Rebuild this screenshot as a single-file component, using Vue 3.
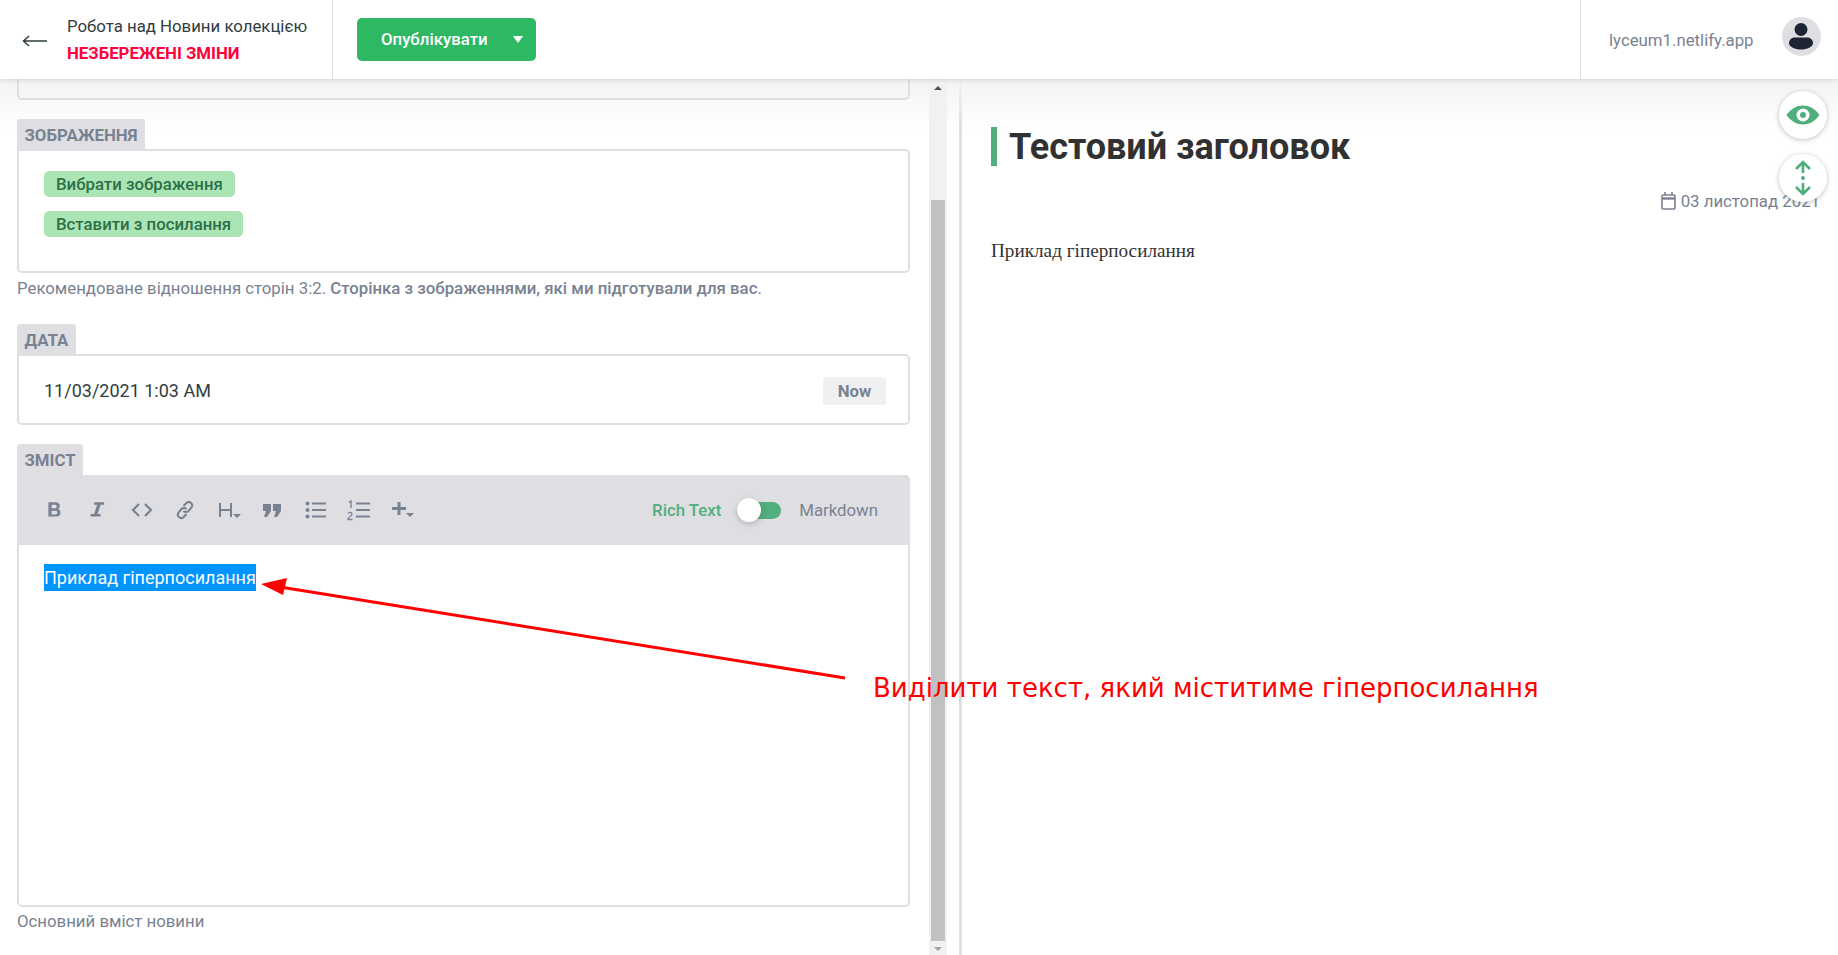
<script setup>
const tools = [
  { key: 'bold', d: 'M4 3h6.2c2.6 0 4.2 1.3 4.2 3.4 0 1.4-.8 2.4-1.9 2.8 1.5.4 2.500 1.6 2.500 3.2 0 2.4-1.8 3.6-4.500 3.6H4zm2.900 2.300v3.100h2.900c1.100 0 1.800-.6 1.800-1.600s-.7-1.500-1.800-1.500zm0 5.300v3.400h3.200c1.300 0 2-.6 2-1.700s-.7-1.700-2-1.700z' },
  { key: 'italic', d: 'M6.500 3h9v2.300h-3.100l-2.800 8.400h2.700V16h-9v-2.300h3.100l2.800-8.400H6.500z' }
]
</script>

<template>
  <div class="page">
    <header class="topbar">
      <div class="back-block">
        <svg class="back-arrow" width="26" height="12" viewBox="0 0 26 12"><path d="M25 6H2M7 1 1.500 6 7 11" fill="none" stroke="#313d3e" stroke-width="1.500"/></svg>
        <div class="back-text">
          <div class="back-title">Робота над Новини колекцією</div>
          <div class="back-status">НЕЗБЕРЕЖЕНІ ЗМІНИ</div>
        </div>
      </div>
      <div class="publish-block">
        <div class="publish-btn">
          <span>Опублікувати</span>
          <i class="caret"></i>
        </div>
      </div>
      <div class="site-block">
        <span class="site-url">lyceum1.netlify.app</span>
        <div class="avatar">
          <svg width="26" height="28" viewBox="0 0 26 28"><circle cx="13" cy="7.500" r="6.500" fill="#1e2532"/><path d="M1 21c0-3.500 3-5.500 6-5.500h12c3 0 6 2 6 5.500 0 4-6 6.500-12 6.500S1 25 1 21z" fill="#1e2532"/></svg>
        </div>
      </div>
    </header>

    <main class="workspace">
      <div class="shade"></div>

      <section class="editor">
        <div class="cut-box"></div>

        <div class="field">
          <div class="tag">ЗОБРАЖЕННЯ</div>
          <div class="box image-box">
            <div class="green-btn">Вибрати зображення</div>
            <div class="green-btn">Вставити з посилання</div>
          </div>
          <p class="hint">Рекомендоване відношення сторін 3:2. <b>Сторінка з зображеннями, які ми підготували для вас</b>.</p>
        </div>

        <div class="field date-field">
          <div class="tag">ДАТА</div>
          <div class="box date-box">
            <span class="date-value">11/03/2021 1:03 AM</span>
            <div class="now-btn">Now</div>
          </div>
        </div>

        <div class="field body-field">
          <div class="tag">ЗМІСТ</div>
          <div class="toolbar">
            <div class="tool" v-for="t in tools" :key="t.key">
              <svg width="22" height="22" viewBox="0 0 20 20"><path :d="t.d" fill="#798291" fill-rule="evenodd"/></svg>
            </div>
            <div class="tool">
              <svg width="24" height="20" viewBox="0 0 24 20"><path d="M9 4 3 10l6 6M15 4l6 6-6 6" fill="none" stroke="#798291" stroke-width="2.200"/></svg>
            </div>
            <div class="tool">
              <svg width="20" height="20" viewBox="0 0 20 20" fill="none" stroke="#798291" stroke-width="2"><path d="m8.500 6 2.800-3a3.400 3.400 0 0 1 5 4.600L13.500 11a3.400 3.400 0 0 1-5 0"/><path d="m11.500 14-2.800 3a3.400 3.400 0 0 1-5-4.600L6.500 9a3.400 3.400 0 0 1 5 0"/></svg>
            </div>
            <div class="tool">
              <svg width="26" height="20" viewBox="0 0 26 20"><path d="M4 3v14M15 3v14M4 10h11" fill="none" stroke="#798291" stroke-width="2"/><path d="M17 14h8l-4 4z" fill="#798291"/></svg>
            </div>
            <div class="tool">
              <svg width="20" height="20" viewBox="0 0 20 20"><path d="M1 4h8v7l-4 6H2l2-6H1zM11 4h8v7l-4 6h-3l2-6h-3z" fill="#798291"/></svg>
            </div>
            <div class="tool">
              <svg width="22" height="20" viewBox="0 0 22 20"><circle cx="2.500" cy="3.500" r="2" fill="#798291"/><circle cx="2.500" cy="10" r="2" fill="#798291"/><circle cx="2.500" cy="16.500" r="2" fill="#798291"/><path d="M7 3.500h14M7 10h14M7 16.500h14" stroke="#798291" stroke-width="2.200"/></svg>
            </div>
            <div class="tool">
              <svg width="24" height="22" viewBox="0 0 24 22" fill="none" stroke="#798291"><path d="M2 3.500 4 2v7" stroke-width="1.300"/><path d="M1 14.500c.6-1.600 4-1.500 4 .4 0 1.700-3.800 3-4 5.600h4.400" stroke-width="1.300"/><path d="M9 4.500h14M9 11h14M9 17.500h14" stroke-width="2.200"/></svg>
            </div>
            <div class="tool">
              <svg width="24" height="20" viewBox="0 0 24 20"><path d="M1 8.500h14M8 2v13" fill="none" stroke="#798291" stroke-width="3"/><path d="M15 13h8l-4 4z" fill="#798291"/></svg>
            </div>
            <div class="mode-switch">
              <span class="mode-on">Rich Text</span>
              <div class="switch"><i class="knob"></i></div>
              <span class="mode-off">Markdown</span>
            </div>
          </div>
          <div class="box body-box">
            <span class="selected">Приклад гіперпосилання</span>
          </div>
          <p class="hint">Основний вміст новини</p>
        </div>
      </section>

      <div class="scrollbar">
        <i class="scroll-up"></i>
        <div class="thumb"></div>
        <i class="scroll-down"></i>
      </div>
      <div class="divider"></div>

      <section class="preview">
        <h1 class="preview-title">Тестовий заголовок</h1>
        <div class="preview-date">
          <svg width="15" height="18" viewBox="0 0 15 18" fill="none" stroke="#798291" stroke-width="1.600"><rect x="1" y="3" width="13" height="14" rx="1"/><path d="M1 6.500h13" stroke-width="2.400"/><path d="M4 0v3M11 0v3"/></svg>
          <span>03 листопад 2021</span>
        </div>
        <p class="preview-text">Приклад гіперпосилання</p>
      </section>

      <div class="round-btn eye-btn">
        <svg width="34" height="20" viewBox="0 0 34 20"><path d="M0.500 10C5 3.500 11 .5 17 .5S29 3.500 33.500 10C29 16.500 23 19.500 17 19.500S5 16.500 .5 10z" fill="#4fae7c"/><circle cx="17" cy="10" r="6.500" fill="#fff"/><circle cx="17" cy="10" r="3" fill="#4fae7c"/></svg>
      </div>
      <div class="round-btn sync-btn">
        <svg width="20" height="36" viewBox="0 0 20 36" fill="none" stroke="#4fae7c" stroke-width="2.600"><path d="M3 9l7-7 7 7M10 2v11M3 27l7 7 7-7M10 34V23"/><circle cx="10" cy="18" r="2" fill="#4fae7c" stroke="none"/></svg>
      </div>
    </main>

    <svg class="callout-arrow" width="1838" height="955" viewBox="0 0 1838 955">
      <path d="M845 678 280 587" stroke="#f00" stroke-width="3" fill="none"/>
      <path d="M261 584 287 578 283 595z" fill="#f00"/>
    </svg>
    <div class="callout-text">Виділити текст, який міститиме гіперпосилання</div>
  </div>
</template>

<style>
html, body {
  margin: 0;
  background: #fff;
}
</style>

<style scoped>
.page {
  position: relative;
  width: 1838px;
  height: 955px;
  overflow: hidden;
  display: flex;
  flex-direction: column;
  font-family: Roboto, "Liberation Sans", sans-serif;
  color: #313d3e;
  background: #fff;
}

.topbar {
  position: relative;
  z-index: 3;
  flex: none;
  height: 79px;
  display: flex;
  background: #fff;
  box-shadow: 0 1px 4px rgba(68, 74, 87, 0.18);
}
.back-block {
  width: 333px;
  box-sizing: border-box;
  display: flex;
  align-items: center;
  padding-left: 22px;
  border-right: 1px solid #dfdfe3;
}
.back-arrow {
  margin-right: 19px;
  margin-top: 3px;
}
.back-title {
  font-size: 16.800px;
  line-height: 19px;
  margin-bottom: 8px;
}
.back-status {
  font-size: 16.800px;
  line-height: 19px;
  font-weight: 700;
  color: #ff003b;
}
.publish-block {
  flex: 1;
  padding: 18px 0 0 24px;
}
.publish-btn {
  width: 179px;
  height: 43px;
  box-sizing: border-box;
  padding: 0 0 2px 24px;
  display: flex;
  align-items: center;
  border-radius: 5px;
  background: #2fb863;
  color: #fff;
  font-size: 16.800px;
  font-weight: 500;
}
.caret {
  margin-left: 25px;
  border-top: 7px solid #fff;
  border-left: 5.500px solid transparent;
  border-right: 5.500px solid transparent;
  margin-top: 2px;
}
.site-block {
  width: 258px;
  box-sizing: border-box;
  display: flex;
  align-items: center;
  border-left: 1px solid #dfdfe3;
  padding-left: 28px;
}
.site-url {
  font-size: 16.800px;
  color: #798291;
  margin-right: 28px;
}
.avatar {
  width: 39px;
  height: 39px;
  border-radius: 50%;
  background: #dfdfe3;
  display: flex;
  align-items: center;
  justify-content: center;
  margin-top: -7px;
}

.workspace {
  position: relative;
  flex: 1;
  display: flex;
  overflow: hidden;
}
.shade {
  position: absolute;
  left: 0;
  right: 0;
  top: 0;
  height: 50px;
  background: linear-gradient(#f3f3f3, rgba(255, 255, 255, 0));
  pointer-events: none;
}

.editor {
  position: relative;
  width: 929px;
  flex: none;
  box-sizing: border-box;
  padding: 0 19px 0 17px;
}
.cut-box {
  height: 19px;
  border: 2px solid #dfdfe3;
  border-top: none;
  border-radius: 0 0 5px 5px;
  margin-bottom: 19px;
}
.tag {
  display: inline-block;
  vertical-align: top;
  height: 31px;
  line-height: 32px;
  padding: 0 7.500px;
  background: #dfdfe3;
  border-radius: 3px 3px 0 0;
  color: #798291;
  font-size: 16.800px;
  font-weight: 700;
}
.box {
  box-sizing: border-box;
  border: 2px solid #dfdfe3;
  background: #fff;
  border-radius: 0 5px 5px 5px;
}
.image-box {
  height: 124px;
  padding: 20px 0 0 25px;
  margin-top: -1px;
}
.green-btn {
  display: table;
  height: 26px;
  line-height: 26px;
  padding: 0 12px;
  margin-bottom: 14px;
  border-radius: 5px;
  background: #abe5b6;
  color: #2b7047;
  font-size: 16.800px;
  font-weight: 500;
}
.hint {
  margin: 6px 0 0;
  height: 19px;
  line-height: 19px;
  font-size: 16.800px;
  color: #798291;
}
.hint b {
  font-weight: 500;
}
.date-field {
  margin-top: 26px;
}
.date-box {
  height: 71px;
  display: flex;
  align-items: center;
  justify-content: space-between;
  padding: 0 22px 0 25px;
  font-size: 18px;
  margin-top: -1px;
}
.date-value {
  margin-top: 2px;
}
.now-btn {
  width: 63px;
  height: 28px;
  line-height: 28px;
  margin-top: 3px;
  text-align: center;
  background: #eff0f1;
  border-radius: 3px;
  color: #798291;
  font-size: 16.800px;
  font-weight: 700;
}
.body-field {
  margin-top: 19px;
}
.toolbar {
  height: 70px;
  display: flex;
  align-items: center;
  background: #dfdfe3;
  border-radius: 0 5px 0 0;
  padding-left: 16px;
}
.tool {
  width: 43.500px;
  flex: none;
  display: flex;
  justify-content: center;
}
.mode-switch {
  margin-left: auto;
  display: flex;
  align-items: center;
  font-size: 16.800px;
  padding-right: 32px;
}
.mode-on {
  color: #52ae7d;
  font-weight: 500;
}
.mode-off {
  color: #798291;
}
.switch {
  position: relative;
  width: 44px;
  height: 17px;
  margin: 0 18px 0 16px;
  border-radius: 9px;
  background: #52ae7d;
}
.knob {
  position: absolute;
  left: 0;
  top: -4px;
  width: 24px;
  height: 24px;
  border-radius: 50%;
  background: #fff;
  box-shadow: 0 2px 6px rgba(68, 74, 87, 0.3);
}
.body-box {
  height: 362px;
  border-top: none;
  border-radius: 0 0 5px 5px;
  padding: 19px 25px 0;
}
.selected {
  display: inline-block;
  height: 27px;
  line-height: 27px;
  background: #0094ff;
  color: #fff;
  font-size: 18px;
}
.body-field .hint {
  margin-top: 5px;
}

.scrollbar {
  position: relative;
  width: 18px;
  flex: none;
  background: #f1f1f1;
}
.thumb {
  position: absolute;
  left: 2px;
  right: 2px;
  top: 121px;
  bottom: 14px;
  background: #c1c1c1;
}
.scroll-up,
.scroll-down {
  position: absolute;
  left: 5px;
  border-left: 4px solid transparent;
  border-right: 4px solid transparent;
}
.scroll-up {
  top: 7px;
  border-bottom: 4px solid #505050;
}
.scroll-down {
  bottom: 4px;
  border-top: 4px solid #a3a3a3;
}
.divider {
  flex: none;
  width: 3px;
  margin-left: 12px;
  background: #dfdfe3;
}

.preview {
  position: relative;
  flex: 1;
  padding: 48px 18px 0 29px;
}
.preview-title {
  margin: 0;
  height: 39px;
  line-height: 40px;
  padding-left: 12px;
  border-left: 6px solid #52ae7d;
  font-size: 36px;
  font-weight: 700;
  color: #313131;
}
.preview-date {
  margin-top: 25px;
  display: flex;
  justify-content: flex-end;
  align-items: center;
  gap: 5px;
  height: 20px;
  font-size: 16.800px;
  color: #798291;
}
.preview-text {
  margin: 28px 0 0;
  font-family: "Liberation Serif", serif;
  font-size: 19.200px;
  line-height: 24px;
  color: #333;
}

.round-btn {
  position: absolute;
  z-index: 2;
  left: 1779px;
  width: 48px;
  height: 48px;
  border-radius: 50%;
  background: #fff;
  box-shadow: 0 1px 5px rgba(68, 74, 87, 0.35);
  display: flex;
  align-items: center;
  justify-content: center;
}
.eye-btn {
  top: 12px;
}
.sync-btn {
  top: 75px;
}

.callout-arrow {
  position: absolute;
  z-index: 4;
  left: 0;
  top: 0;
  pointer-events: none;
}
.callout-text {
  position: absolute;
  z-index: 4;
  left: 873px;
  top: 672px;
  line-height: 32px;
  white-space: nowrap;
  font-family: "DejaVu Sans", sans-serif;
  font-size: 26px;
  color: #f00;
}
</style>
